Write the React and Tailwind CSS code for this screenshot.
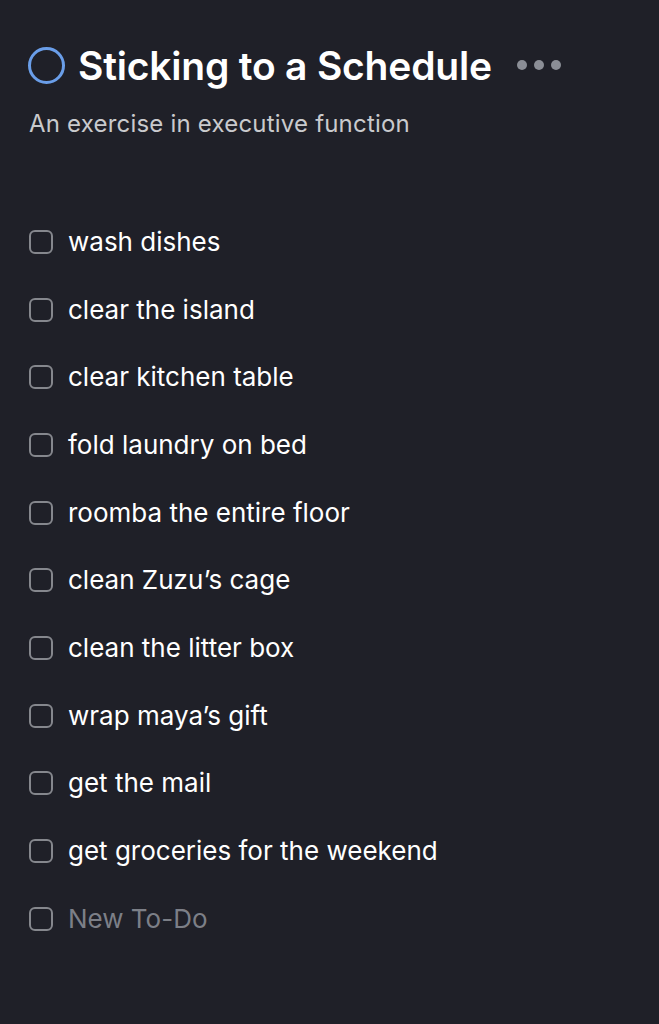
import React from 'react';

const todos = [
  'wash dishes',
  'clear the island',
  'clear kitchen table',
  'fold laundry on bed',
  'roomba the entire floor',
  'clean Zuzu’s cage',
  'clean the litter box',
  'wrap maya’s gift',
  'get the mail',
  'get groceries for the weekend',
];

const Checkbox = () => (
  <div className="w-[24px] h-[24px] rounded-[6px] border-2 border-[#85878d] shrink-0" />
);

const App = () => {
  return (
    <div
      className="w-[659px] h-[1024px] bg-[#1f2028] text-white overflow-hidden"
      style={{ fontFamily: 'Inter, "Noto Sans", sans-serif' }}
    >
      <div className="pt-[44px] pl-[28px]">
        <div className="flex items-center h-[42px]">
          <div className="w-[37px] h-[37px] rounded-full border-[3px] border-[#6a9ee9] shrink-0" />
          <h1 className="ml-[13px] text-[39px] font-semibold tracking-[-0.2px] leading-none">
            Sticking to a Schedule
          </h1>
          <div className="ml-[25px] flex gap-[7px] items-center">
            <span className="w-[10px] h-[10px] rounded-full bg-[#8b8e96]" />
            <span className="w-[10px] h-[10px] rounded-full bg-[#8b8e96]" />
            <span className="w-[10px] h-[10px] rounded-full bg-[#8b8e96]" />
          </div>
        </div>
        <p className="mt-[23px] pl-[1px] text-[24px] text-[#c9cacd] leading-[30px] tracking-[0.2px]">
          An exercise in executive function
        </p>
      </div>
      <ul className="mt-[69px] pl-[29px]">
        {todos.map((t) => (
          <li key={t} className="flex items-center h-[67.7px] gap-[15px]">
            <Checkbox />
            <span className="text-[26px] leading-none">{t}</span>
          </li>
        ))}
        <li className="flex items-center h-[67.7px] gap-[15px]">
          <Checkbox />
          <span className="text-[26px] leading-none text-[#7c7f87]">New To-Do</span>
        </li>
      </ul>
    </div>
  );
};

export default App;
